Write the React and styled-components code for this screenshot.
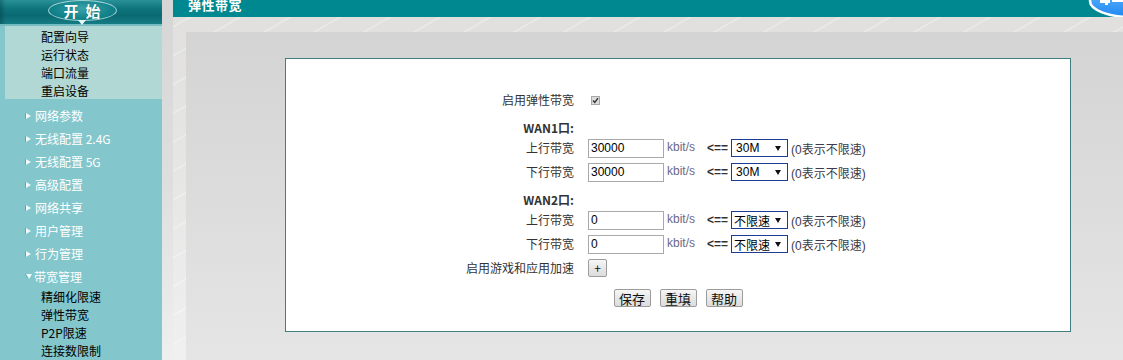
import React from "react";
import styled, { createGlobalStyle } from "styled-components";

const Global = createGlobalStyle`
  html, body { margin: 0; padding: 0; width: 1123px; height: 360px; overflow: hidden; }
  body { font-family: "Liberation Sans", "Noto Sans CJK SC", sans-serif; font-size: 12px; color: #333; }
  * { box-sizing: border-box; }
`;

const Page = styled.div`
  display: flex;
  width: 1123px;
  height: 360px;
`;

/* ---------- sidebar ---------- */
const Sidebar = styled.div`
  width: 162px;
  flex-shrink: 0;
  display: flex;
  flex-direction: column;
  background: #83c6cc;
  font-family: "Noto Sans CJK SC", "Liberation Sans", sans-serif;
`;

const SideHeader = styled.div`
  height: 25px;
  position: relative;
  display: flex;
  justify-content: center;
  padding-left: 2px;
  background:
    linear-gradient(to right, rgba(0,50,55,0.35) 0px, rgba(0,0,0,0) 6px),
    linear-gradient(to bottom, #2a9199 0%, #0f757d 35%, #0a6a72 65%, #167c84 100%);
`;

const StartOval = styled.div`
  width: 69px;
  height: 21px;
  border-radius: 50%;
  border: 1px solid rgba(210, 240, 240, 0.75);
  background: radial-gradient(ellipse at 50% 40%, #3aa3aa 0%, #13838b 60%, #0b6e76 100%);
  color: #fff;
  font-weight: bold;
  font-size: 15px;
  line-height: 19px;
  text-align: center;
  letter-spacing: 7px;
  text-indent: 7px;
  text-shadow: 0 0 1px #0a5a60;
`;

const StartArrow = styled.div`
  position: absolute;
  left: 78px;
  top: 20px;
  width: 0;
  height: 0;
  border-left: 4px solid transparent;
  border-right: 4px solid transparent;
  border-top: 5px solid #e8f6f6;
`;

const SideDivider = styled.div`
  height: 2px;
  background: #74bcc1;
`;

const QuickMenu = styled.div`
  margin-left: 5px;
  height: 73px;
  background: #b1d8d4;
  padding-top: 2px;
`;

const QuickItem = styled.div`
  height: 18px;
  line-height: 18px;
  padding-left: 36px;
  color: #000;
  font-size: 12px;
`;

const MainMenu = styled.div`
  padding-top: 5px;
`;

const MenuItem = styled.div`
  height: 23px;
  display: flex;
  align-items: center;
  padding-left: 26px;
  gap: 4px;
  color: #fff;
  font-size: 12px;
`;

const Tri = styled.span`
  display: inline-block;
  width: 0;
  height: 0;
  ${(p) =>
    p.$open
      ? `border-left: 3.5px solid transparent; border-right: 3.5px solid transparent; border-top: 5px solid #f0fafa; margin-right: -2px;`
      : `border-top: 3.5px solid transparent; border-bottom: 3.5px solid transparent; border-left: 5px solid #f0fafa;`}
  filter: drop-shadow(-1px 0 0 #5aa8ae);
`;

const SubItem = styled.div`
  height: 18px;
  line-height: 18px;
  padding-left: 41px;
  color: #000;
  font-size: 12px;
`;

/* ---------- gutter & main ---------- */
const Gutter = styled.div`
  width: 11px;
  flex-shrink: 0;
  background: linear-gradient(to bottom, #d6d6d6 0%, #dedede 50%, #efefef 100%);
`;

const Main = styled.div`
  flex: 1;
  display: flex;
  flex-direction: column;
  background:
    repeating-linear-gradient(150deg, rgba(255,255,255,0) 0px, rgba(255,255,255,0) 22px, rgba(255,255,255,0.35) 23px, rgba(255,255,255,0) 25px),
    linear-gradient(to bottom, #e0dfdd 0%, #e6e6e5 50%, #f0f0f0 100%);
`;

const TitleBar = styled.div`
  height: 17px;
  position: relative;
  background: #008890;
  padding-left: 15px;
  overflow: hidden;
`;

const TitleText = styled.div`
  color: #fff;
  font-weight: bold;
  font-size: 13px;
  line-height: 9px;
  font-family: "Noto Sans CJK SC", sans-serif;
  letter-spacing: 0.5px;
`;

const Logo = styled.svg`
  position: absolute;
  right: 0;
  top: 0;
`;

const Body = styled.div`
  flex: 1;
  display: flex;
  padding-top: 15px;
  padding-left: 13px;
`;

const Panel = styled.div`
  flex: 1;
  background: linear-gradient(to bottom, #d4d4d4 0%, #dcdcdc 50%, #e5e5e5 100%);
  padding: 26px 0 0 99px;
`;

const Box = styled.div`
  width: 786px;
  height: 274px;
  background: #fff;
  border: 1px solid #3f7f80;
  padding-top: 31px;
  display: flex;
  flex-direction: column;
`;

const Row = styled.div`
  display: grid;
  grid-template-columns: 288px 1fr;
  column-gap: 14px;
  align-items: center;
  height: ${(p) => p.$h || 24}px;
  margin-top: ${(p) => p.$mt || 0}px;
`;

const Label = styled.div`
  text-align: right;
  font-family: "Noto Sans CJK SC", "Liberation Sans", sans-serif;
  font-size: 12px;
  color: #333;
  font-weight: ${(p) => (p.$bold ? "bold" : "normal")};
  line-height: 16px;
`;

const Cell = styled.div`
  display: flex;
  align-items: center;
`;

const Check = styled.span`
  width: 9px;
  height: 9px;
  margin-left: 3px;
  border: 1px solid #a8a8a8;
  background: #dcdcdc;
  display: flex;
  align-items: center;
  justify-content: center;
`;

const TextInput = styled.div`
  width: 76px;
  height: 19px;
  border: 1px solid #a9a9a9;
  font-size: 12px;
  line-height: 17px;
  padding-left: 2px;
  color: #000;
`;

const Unit = styled.span`
  margin-left: 3px;
  color: #6b6a86;
  font-size: 12px;
  margin-top: -2px;
`;

const Arrow = styled.span`
  margin-left: 12px;
  font-weight: bold;
  color: #333;
  font-size: 12px;
`;

const Select = styled.div`
  margin-left: 3px;
  width: 57px;
  height: 18px;
  border: 1px solid #1c3c94;
  display: flex;
  align-items: center;
  padding-left: ${(p) => p.$pl || 4}px;
  font-family: "Liberation Sans", "Noto Sans CJK SC", sans-serif;
  font-size: 12px;
  color: #000;
`;

const Caret = styled.span`
  margin-left: auto;
  margin-right: 6px;
  width: 0;
  height: 0;
  border-left: 3px solid transparent;
  border-right: 3px solid transparent;
  border-top: 5px solid #111;
`;

const Hint = styled.span`
  margin-left: 3px;
  color: #3a3a4a;
  font-family: "Liberation Sans", "Noto Sans CJK SC", sans-serif;
  font-size: 12px;
`;

const Btn = styled.div`
  width: ${(p) => p.$w || 37}px;
  height: 18px;
  border: 1px solid #9c9c9c;
  border-radius: 2px;
  background: linear-gradient(to bottom, #f6f6f6 0%, #e8e8e8 50%, #dcdcdc 100%);
  display: flex;
  align-items: center;
  justify-content: center;
  font-family: "Noto Sans CJK SC", sans-serif;
  font-size: ${(p) => p.$fs || 13}px;
  color: #111;
  line-height: 1;
`;

const BtnRow = styled.div`
  display: flex;
  justify-content: center;
  gap: 9px;
  height: 24px;
  align-items: center;
  margin-top: 6px;
`;

const quick = ["配置向导", "运行状态", "端口流量", "重启设备"];
const menu = ["网络参数", "无线配置 2.4G", "无线配置 5G", "高级配置", "网络共享", "用户管理", "行为管理"];
const subs = ["精细化限速", "弹性带宽", "P2P限速", "连接数限制"];

function FieldRow({ label, value, sel, pl }) {
  return (
    <Row>
      <Label>{label}</Label>
      <Cell>
        <TextInput>{value}</TextInput>
        <Unit>kbit/s</Unit>
        <Arrow>&lt;==</Arrow>
        <Select $pl={pl}>
          {sel}
          <Caret />
        </Select>
        <Hint>(0表示不限速)</Hint>
      </Cell>
    </Row>
  );
}

export default function App() {
  return (
    <>
      <Global />
      <Page>
        <Sidebar>
          <SideHeader>
            <StartOval>开始</StartOval>
            <StartArrow />
          </SideHeader>
          <SideDivider />
          <QuickMenu>
            {quick.map((q) => (
              <QuickItem key={q}>{q}</QuickItem>
            ))}
          </QuickMenu>
          <MainMenu>
            {menu.map((m) => (
              <MenuItem key={m}>
                <Tri />
                {m}
              </MenuItem>
            ))}
            <MenuItem>
              <Tri $open />
              带宽管理
            </MenuItem>
            {subs.map((s) => (
              <SubItem key={s}>{s}</SubItem>
            ))}
          </MainMenu>
        </Sidebar>
        <Gutter />
        <Main>
          <TitleBar>
            <TitleText>弹性带宽</TitleText>
            <Logo width="36" height="17" viewBox="0 0 36 17">
              <defs>
                <linearGradient id="lg" x1="0" y1="0" x2="0" y2="1">
                  <stop offset="0" stopColor="#6cbcff" />
                  <stop offset="1" stopColor="#1f88f2" />
                </linearGradient>
              </defs>
              <ellipse cx="44" cy="1" rx="41" ry="16" fill="url(#lg)" stroke="#fff" strokeWidth="2.5" />
              <rect x="13" y="0" width="10" height="3" fill="#fff" />
              <rect x="25" y="0" width="11" height="2" fill="#fff" />
              <rect x="18" y="3" width="3" height="2" fill="#fff" />
            </Logo>
          </TitleBar>
          <Body>
            <Panel>
              <Box>
                <Row $h={20}>
                  <Label>启用弹性带宽</Label>
                  <Cell>
                    <Check>
                      <svg width="7" height="7" viewBox="0 0 7 7">
                        <path d="M1 3.5 L2.8 5.5 L6 1.2" fill="none" stroke="#333" strokeWidth="1.4" />
                      </svg>
                    </Check>
                  </Cell>
                </Row>
                <Row $h={16} $mt={10}>
                  <Label $bold>WAN1口:</Label>
                  <span />
                </Row>
                <FieldRow label="上行带宽" value="30000" sel="30M" />
                <FieldRow label="下行带宽" value="30000" sel="30M" />
                <Row $h={16} $mt={8}>
                  <Label $bold>WAN2口:</Label>
                  <span />
                </Row>
                <FieldRow label="上行带宽" value="0" sel="不限速" pl={2} />
                <FieldRow label="下行带宽" value="0" sel="不限速" pl={2} />
                <Row>
                  <Label>启用游戏和应用加速</Label>
                  <Cell>
                    <Btn $w={19} $fs={12}>+</Btn>
                  </Cell>
                </Row>
                <BtnRow>
                  <Btn>保存</Btn>
                  <Btn>重填</Btn>
                  <Btn>帮助</Btn>
                </BtnRow>
              </Box>
            </Panel>
          </Body>
        </Main>
      </Page>
    </>
  );
}
